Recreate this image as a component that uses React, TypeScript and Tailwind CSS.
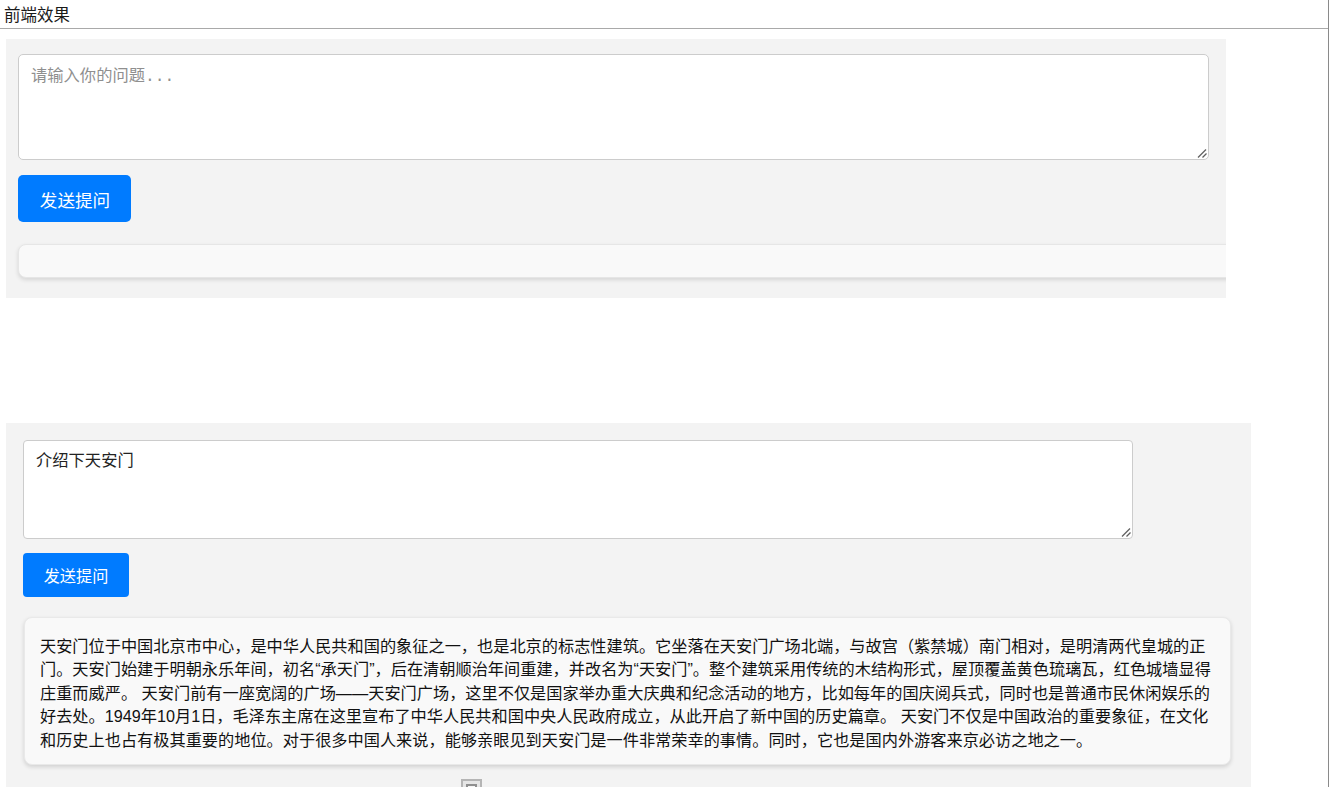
import React from "react";

const answer =
  "天安门位于中国北京市中心，是中华人民共和国的象征之一，也是北京的标志性建筑。它坐落在天安门广场北端，与故宫（紫禁城）南门相对，是明清两代皇城的正门。天安门始建于明朝永乐年间，初名“承天门”，后在清朝顺治年间重建，并改名为“天安门”。整个建筑采用传统的木结构形式，屋顶覆盖黄色琉璃瓦，红色城墙显得庄重而威严。 天安门前有一座宽阔的广场——天安门广场，这里不仅是国家举办重大庆典和纪念活动的地方，比如每年的国庆阅兵式，同时也是普通市民休闲娱乐的好去处。1949年10月1日，毛泽东主席在这里宣布了中华人民共和国中央人民政府成立，从此开启了新中国的历史篇章。 天安门不仅是中国政治的重要象征，在文化和历史上也占有极其重要的地位。对于很多中国人来说，能够亲眼见到天安门是一件非常荣幸的事情。同时，它也是国内外游客来京必访之地之一。";

const sans = "font-['Liberation_Sans','Noto_Sans_CJK_SC',sans-serif]";

const Grip: React.FC = () => (
  <svg
    className="pointer-events-none absolute bottom-[2px] right-[2px] h-[10px] w-[10px]"
    viewBox="0 0 10 10"
    fill="none"
    stroke="#5f5f5f"
    strokeWidth="1.2"
  >
    <path d="M1 9.5 L9 1.5" />
    <path d="M5.5 9.5 L9.5 5.5" />
  </svg>
);

const App: React.FC = () => {
  return (
    <div className={`h-[787px] w-[1329px] overflow-hidden border-r border-r-[#8a8a8a] bg-white ${sans}`}>
      <div className="h-[29px] border-b border-b-[#a9a9a9] pl-[4px] pt-[4px] text-[16.5px] leading-[22px] text-[#1a1a1a]">
        前端效果
      </div>

      {/* first render: empty state, reply box runs past the panel */}
      <section className="ml-[6px] mt-[10px] h-[259px] w-[1220px] overflow-hidden bg-[#f3f3f3] pl-[12px] pt-[15px]">
        <div className="relative h-[106px] w-[1191px]">
          <textarea
            placeholder="请输入你的问题..."
            className="block h-full w-full resize-none rounded-[5px] border border-[#cccccc] bg-white px-[12px] pb-[10px] pt-[11px] font-['Liberation_Mono','Noto_Sans_CJK_SC',monospace] text-[16.3px] leading-[22px] placeholder:text-[#8f8f8f]"
          />
          <Grip />
        </div>
        <button className="mt-[15px] block h-[47px] w-[113px] rounded-[5px] bg-[#007bff] pl-px pt-[6px] text-[17.6px] text-white">
          发送提问
        </button>
        <div className="mt-[22px] h-[34px] w-[1240px] rounded-[8px] border border-[#e6e6e6] bg-[#f9f9f9] shadow-[0_2px_4px_rgba(0,0,0,0.12)]" />
      </section>

      {/* second render: with an answer */}
      <section className="ml-[6px] mt-[125px] h-[364px] w-[1245px] overflow-hidden bg-[#f3f3f3] pl-[17px] pt-[17px]">
        <div className="relative h-[99px] w-[1110px]">
          <textarea
            defaultValue="介绍下天安门"
            className="block h-full w-full resize-none rounded-[4px] border border-[#cccccc] bg-white px-[12px] pb-[9px] pt-[10px] font-['Liberation_Mono','Noto_Sans_CJK_SC',monospace] text-[16.3px] leading-[22px] text-[#222222]"
          />
          <Grip />
        </div>
        <button className="mt-[14px] block h-[44px] w-[106px] rounded-[4px] bg-[#007bff] pt-[2px] text-[16.2px] text-white">
          发送提问
        </button>
        <div className="ml-px mt-[20px] h-[148px] w-[1207px] rounded-[8px] border border-[#e9e9e9] bg-[#f9f9f9] pl-[15px] pr-[16px] pt-[16.5px] text-[16.22px] leading-[23.5px] text-[#111111] shadow-[0_2px_4px_rgba(0,0,0,0.14)]">
          {answer}
        </div>
        <div className="ml-[438px] mt-[14px] h-[22px] w-[21px] border-2 border-[#b5b5b5] bg-[#e6e6e6] p-[3px]">
          <div className="h-full w-full border-2 border-[#8f8f8f] bg-[#f5f5f5]" />
        </div>
      </section>
    </div>
  );
};

export default App;
